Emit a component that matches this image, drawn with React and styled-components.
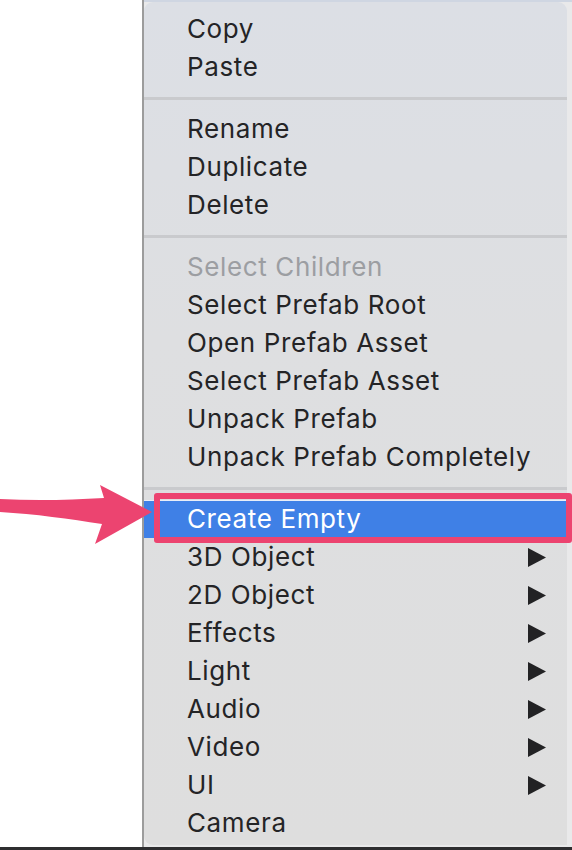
import React from "react";
import styled, { createGlobalStyle } from "styled-components";

const Global = createGlobalStyle`
  html, body { margin: 0; padding: 0; background: #ffffff; }
  body { font-family: Inter, "Liberation Sans", Arial, sans-serif; }
  #root { width: 572px; height: 850px; }
`;

const Page = styled.div`
  position: relative;
  width: 572px;
  height: 850px;
  display: flex;
  flex-direction: column;
  overflow: hidden;
  background: #ffffff;
`;

const Main = styled.div`
  flex: 1;
  display: flex;
  min-height: 0;
`;

const BottomBar = styled.div`
  height: 3px;
  background: #2e2e30;
`;

const BackPane = styled.div`
  width: 142px;
  flex-shrink: 0;
  background: #ffffff;
  border-right: 2px solid #9c9c9c;
`;

const MenuColumn = styled.div`
  flex: 1;
  display: flex;
  flex-direction: column;
  background: linear-gradient(#cfd6e2 0, #cfd6e2 2px, #e9e9ea 2px);
  padding-bottom: 2px;
  padding-right: 5px;
`;

const Menu = styled.div`
  flex: 1;
  margin-top: 2px;
  border-radius: 9px 9px 0 9px;
  background: linear-gradient(180deg, #dcdfe5 0%, #dedfe1 40%, #dedede 100%);
  padding: 8px 0 3px;
  display: flex;
  flex-direction: column;
  overflow: hidden;
`;

const Item = styled.div`
  height: 38px;
  box-sizing: border-box;
  padding: 0 21px 2px 43px;
  display: flex;
  align-items: center;
  justify-content: space-between;
  font-size: 26px;
  letter-spacing: 0.62px;
  color: ${(p) => (p.$disabled ? "#9c9ea2" : p.$active ? "#ffffff" : "#242426")};
  background: ${(p) => (p.$active ? "#3f80e6" : "transparent")};
  box-shadow: ${(p) => (p.$active ? "inset 0 1px 0 #e9eef8" : "none")};
  white-space: nowrap;
`;

const Separator = styled.div`
  height: 24px;
  display: flex;
  align-items: center;
  &::after {
    content: "";
    display: block;
    width: 100%;
    height: 3px;
    background: #c9cacd;
  }
`;

const Triangle = styled.svg`
  width: 18px;
  height: 19px;
  flex-shrink: 0;
  margin-top: 2px;
`;

const Callout = styled.div`
  position: absolute;
  left: 154px;
  top: 493px;
  width: 418px;
  height: 50px;
  box-sizing: border-box;
  border: 6px solid #ec4470;
  border-radius: 3px;
  pointer-events: none;
`;

const Arrow = styled.svg`
  position: absolute;
  left: 0;
  top: 480px;
  width: 160px;
  height: 70px;
  pointer-events: none;
`;

const groups = [
  [{ label: "Copy" }, { label: "Paste" }],
  [{ label: "Rename" }, { label: "Duplicate" }, { label: "Delete" }],
  [
    { label: "Select Children", disabled: true },
    { label: "Select Prefab Root" },
    { label: "Open Prefab Asset" },
    { label: "Select Prefab Asset" },
    { label: "Unpack Prefab" },
    { label: "Unpack Prefab Completely" },
  ],
  [
    { label: "Create Empty", active: true },
    { label: "3D Object", sub: true },
    { label: "2D Object", sub: true },
    { label: "Effects", sub: true },
    { label: "Light", sub: true },
    { label: "Audio", sub: true },
    { label: "Video", sub: true },
    { label: "UI", sub: true },
    { label: "Camera" },
  ],
];

export default function App() {
  return (
    <>
      <Global />
      <Page>
        <Main>
          <BackPane />
          <MenuColumn>
            <Menu>
              {groups.map((g, gi) => (
                <React.Fragment key={gi}>
                  {gi > 0 && <Separator />}
                  {g.map((it) => (
                    <Item key={it.label} $disabled={it.disabled} $active={it.active}>
                      <span>{it.label}</span>
                      {it.sub && (
                        <Triangle viewBox="0 0 18 19">
                          <polygon points="0,0 18,9.5 0,19" fill="#222224" />
                        </Triangle>
                      )}
                    </Item>
                  ))}
                </React.Fragment>
              ))}
            </Menu>
          </MenuColumn>
        </Main>
        <BottomBar />
        <Callout />
        <Arrow viewBox="0 0 160 70">
          <path
            d="M0 19 C 35 21, 70 20, 104 18 L 100 5 L 152 32 L 95 64 L 102 44 C 70 39, 35 34, 0 32 Z"
            fill="#ec4470"
          />
        </Arrow>
      </Page>
    </>
  );
}
